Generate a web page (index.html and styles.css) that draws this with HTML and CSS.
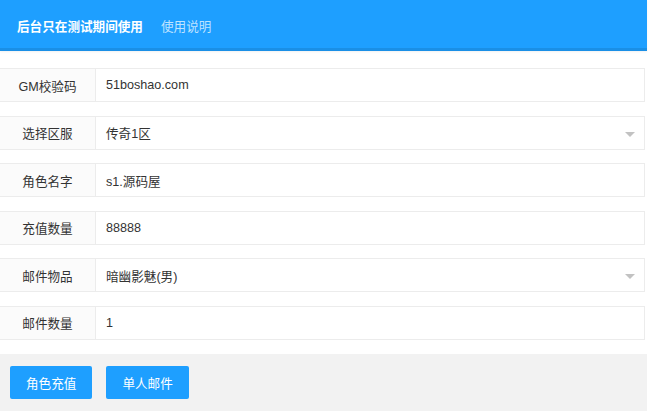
FILE: index.html
```html
<!DOCTYPE html>
<html>
<head>
    <meta charset="UTF-8">
    <title>GM后台</title>
    <link rel="stylesheet" href="styles.css">
</head>
<body>
    <div class="page">
        <div class="header">
            <span class="title">后台只在测试期间使用</span>
            <a class="help-link">使用说明</a>
        </div>

        <div class="form">
            <div class="form-item">
                <label class="form-label">GM校验码</label>
                <div class="form-input">51boshao.com</div>
            </div>
            <div class="form-item">
                <label class="form-label">选择区服</label>
                <div class="form-input select">传奇1区<i class="arrow"></i></div>
            </div>
            <div class="form-item">
                <label class="form-label">角色名字</label>
                <div class="form-input">s1.源码屋</div>
            </div>
            <div class="form-item">
                <label class="form-label">充值数量</label>
                <div class="form-input">88888</div>
            </div>
            <div class="form-item">
                <label class="form-label">邮件物品</label>
                <div class="form-input select">暗幽影魅(男)<i class="arrow"></i></div>
            </div>
            <div class="form-item">
                <label class="form-label">邮件数量</label>
                <div class="form-input">1</div>
            </div>
        </div>

        <div class="actions">
            <button class="btn">角色充值</button>
            <button class="btn">单人邮件</button>
        </div>
    </div>
</body>
</html>
```

FILE: styles.css
```css
body {
    margin: 0;
    padding: 0;
    background-color: #ffffff;
    color: #333333;
    font-family: "Liberation Sans", Arial, "Noto Sans CJK SC", sans-serif;
    font-size: 13px;
}

.page {
    width: 647px;
}

.header {
    display: flex;
    align-items: center;
    height: 48px;
    padding-left: 17px;
    background-color: #1e9fff;
    border-bottom: 3px solid #1a8fe6;
    box-shadow: 0 1px 2px rgba(0, 0, 0, 0.06);
}

.header .title {
    color: #ffffff;
    font-weight: bold;
    font-size: 12.6px;
    margin-top: 2px;
}

.header .help-link {
    color: rgba(255, 255, 255, 0.72);
    font-size: 12.6px;
    margin-left: 18px;
    margin-top: 2px;
}

.form {
    padding-top: 17px;
}

.form-item {
    display: flex;
    height: 34px;
    margin-bottom: 13.6px;
    padding-right: 2px;
}

.form-label {
    width: 96px;
    box-sizing: border-box;
    display: flex;
    align-items: center;
    justify-content: center;
    background-color: #fbfbfb;
    border: 1px solid #ececec;
    border-left: none;
    color: #333333;
    font-size: 12.6px;
}

.form-input {
    flex: 1;
    position: relative;
    box-sizing: border-box;
    display: flex;
    align-items: center;
    padding-left: 10px;
    border: 1px solid #ececec;
    border-left: none;
    color: #333333;
    font-size: 12.6px;
}

.form-input .arrow {
    position: absolute;
    right: 9px;
    top: 15px;
    width: 0;
    height: 0;
    border-left: 5px solid transparent;
    border-right: 5px solid transparent;
    border-top: 5px solid #c2c2c2;
}

.actions {
    display: flex;
    gap: 14px;
    margin-top: 0;
    padding: 12px 10px 13px 10px;
    background-color: #f2f2f2;
    height: 33px;
}

.btn {
    height: 33px;
    padding: 0 16px;
    border: none;
    border-radius: 2px;
    background-color: #1e9fff;
    color: #ffffff;
    font-family: "Liberation Sans", Arial, "Noto Sans CJK SC", sans-serif;
    font-size: 12.6px;
}
```
